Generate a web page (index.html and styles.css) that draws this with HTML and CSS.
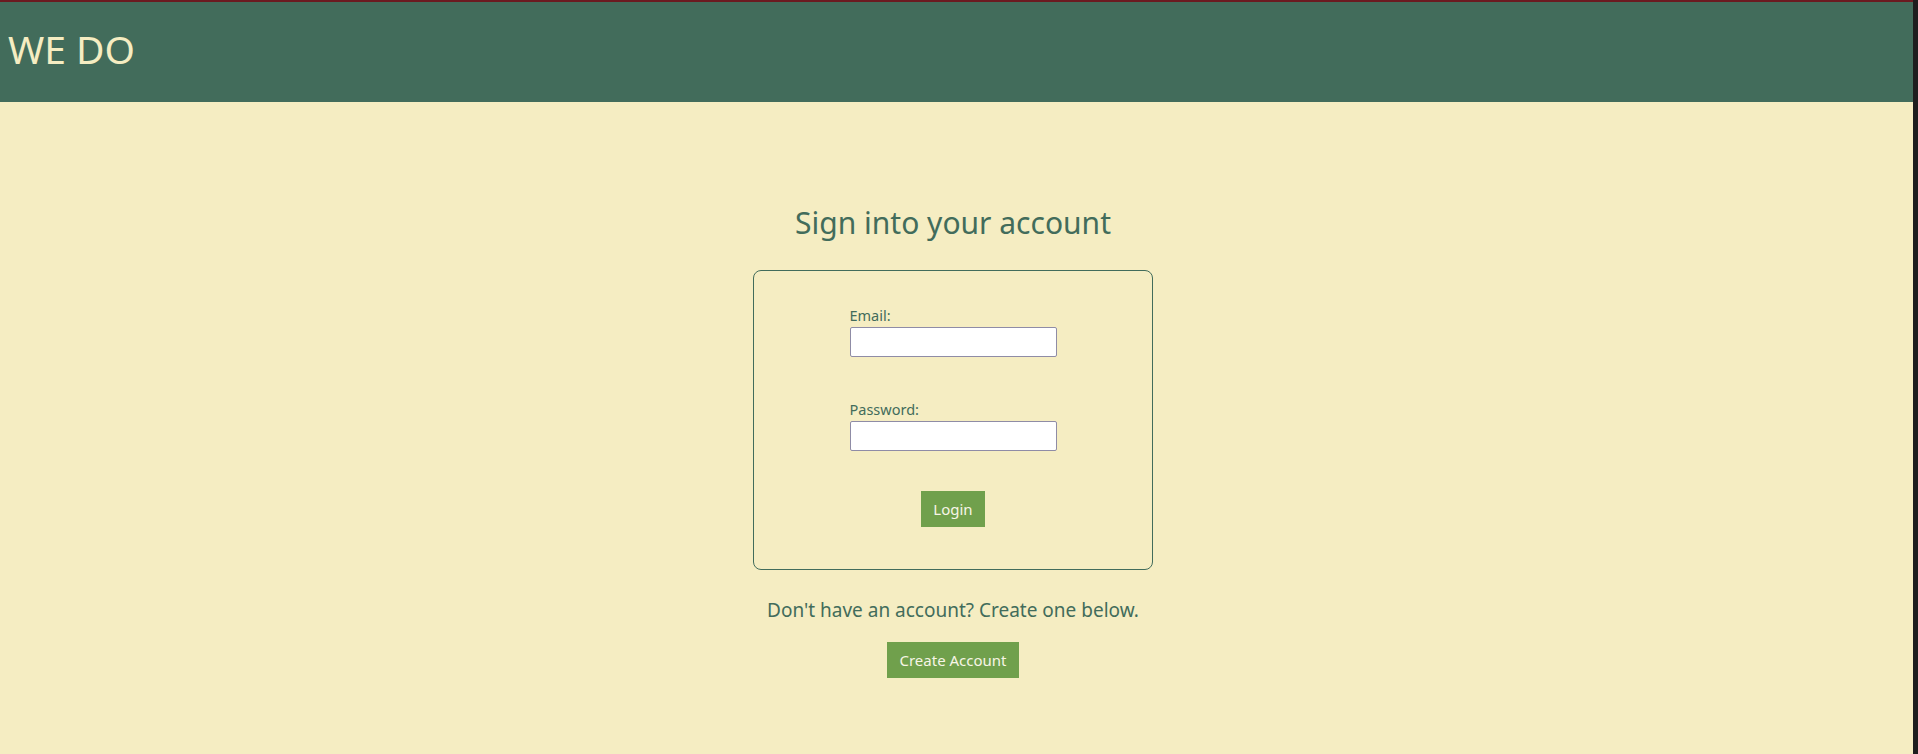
FILE: index.html
```html
<!DOCTYPE html>
<html lang="en">
<head>
<meta charset="utf-8">
<title>WE DO</title>
<link rel="stylesheet" href="styles.css">
</head>
<body>
<div class="page">
  <header class="topbar">
    <h1 class="brand">WE DO</h1>
  </header>
  <main class="content">
    <h2 class="title">Sign into your account</h2>
    <form class="card">
      <div class="field">
        <label class="label" for="email">Email:</label>
        <input class="input" id="email" type="email">
      </div>
      <div class="field field-second">
        <label class="label" for="password">Password:</label>
        <input class="input" id="password" type="password">
      </div>
      <button class="btn btn-login" type="button">Login</button>
    </form>
    <p class="note">Don't have an account? Create one below.</p>
    <button class="btn btn-create" type="button">Create Account</button>
  </main>
</div>
</body>
</html>
```
FILE: styles.css
```css
html, body {
  margin: 0;
  padding: 0;
  height: 100%;
}
body {
  background: #1e1e1e;
  font-family: "Noto Sans", "Open Sans", sans-serif;
  color: #426c5b;
}
.page {
  margin-right: 5px;
  min-height: 100%;
  background: #f5edc2;
  border-top: 2px solid #6b1a20;
  box-sizing: border-box;
}
.topbar {
  height: 100px;
  box-sizing: border-box;
  background: #426c5b;
  display: flex;
  align-items: center;
  padding: 0 0 7px 8px;
}
.brand {
  margin: 0;
  font-weight: 400;
  font-size: 39px;
  color: #f5edc2;
  line-height: 1;
}
.content {
  display: flex;
  flex-direction: column;
  align-items: center;
  padding-right: 7px;
}
.title {
  margin: 101px 0 27px;
  font-weight: 400;
  font-size: 30px;
  line-height: 40px;
  color: #426c5b;
}
.card {
  width: 400px;
  height: 300px;
  box-sizing: border-box;
  border: 1px solid #426c5b;
  border-radius: 8px;
  display: flex;
  flex-direction: column;
  align-items: center;
  padding-top: 35px;
}
.field {
  display: flex;
  flex-direction: column;
  width: 207px;
}
.field-second {
  margin-top: 43px;
}
.label {
  font-size: 14.5px;
  line-height: 18px;
  margin-bottom: 3px;
}
.input {
  width: 207px;
  height: 30px;
  box-sizing: border-box;
  border: 1px solid #8f8ca6;
  border-radius: 2px;
  background: #fff;
  margin: 0;
}
.btn {
  background: #70a04c;
  border: none;
  color: #f7f5e6;
  font-family: "Noto Sans", "Open Sans", sans-serif;
  font-size: 15px;
  height: 36px;
  padding: 0 12px;
  border-radius: 0;
}
.btn-login {
  margin-top: 40px;
  width: 64px;
}
.note {
  margin: 27px 0 19px;
  font-size: 19px;
  line-height: 26px;
}
.btn-create {
  width: 132px;
  padding: 0;
}
```
